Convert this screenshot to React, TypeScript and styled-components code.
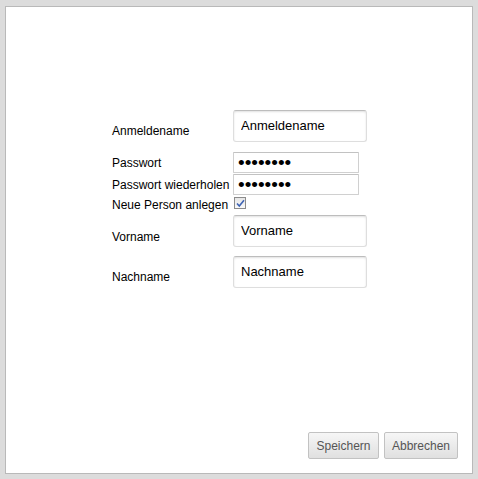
import styled, { createGlobalStyle } from 'styled-components';

const GlobalStyle = createGlobalStyle`
  html, body {
    margin: 0;
    padding: 0;
    background: #dcdcdc;
    font-family: 'Liberation Sans', Arial, sans-serif;
  }
`;

function CheckMark() {
  return (
    <svg width="9" height="9" viewBox="0 0 9 9">
      <path d="M1 4.5 L3.3 7 L8 1.2" fill="none" stroke="#3f64b4" strokeWidth="1.6" />
    </svg>
  );
}

function App() {
  return (
    <>
      <GlobalStyle />
      <Panel>
        <Form>
          <Row>
            <Label>Anmeldename</Label>
            <WideInput defaultValue="Anmeldename" $after={10} />
          </Row>
          <Row>
            <Label>Passwort</Label>
            <PasswordInput type="password" defaultValue="geheim12" $after={1} />
          </Row>
          <Row>
            <Label>Passwort wiederholen</Label>
            <PasswordInput type="password" defaultValue="geheim12" $after={0} />
          </Row>
          <Row>
            <Label>Neue Person anlegen</Label>
            <CheckBox>
              <CheckMark />
            </CheckBox>
          </Row>
          <Row>
            <Label $shift={2}>Vorname</Label>
            <WideInput defaultValue="Vorname" $before={1} $after={9} />
          </Row>
          <Row>
            <Label>Nachname</Label>
            <WideInput defaultValue="Nachname" $after={10} />
          </Row>
        </Form>
        <Footer>
          <Button $width={71}>Speichern</Button>
          <Button $width={74}>Abbrechen</Button>
        </Footer>
      </Panel>
    </>
  );
}

export default App;

const Panel = styled.div`
  box-sizing: border-box;
  margin: 6px 0 0 5px;
  width: 468px;
  height: 468px;
  background: #fff;
  border: 1px solid #b9b9b9;
  display: flex;
  flex-direction: column;
`;

const Form = styled.div`
  padding: 103px 0 0 106px;
  display: flex;
  flex-direction: column;
`;

const Row = styled.div`
  display: flex;
  align-items: center;
`;

const Label = styled.label<{ $shift?: number }>`
  width: 121px;
  flex: none;
  font-size: 12px;
  line-height: 14px;
  color: #000;
  white-space: nowrap;
  position: relative;
  top: ${({ $shift }) => $shift ?? 0}px;
`;

const WideInput = styled.input<{ $before?: number; $after?: number }>`
  box-sizing: border-box;
  width: 134px;
  height: 32px;
  margin: ${({ $before }) => $before ?? 0}px 0 ${({ $after }) => $after ?? 0}px 0;
  padding: 0 0 2px 7px;
  border: 1px solid #dedede;
  border-top-color: #bdbdbd;
  border-radius: 3px;
  box-shadow: inset 0 1px 2px rgba(0, 0, 0, 0.12);
  font-family: 'Liberation Sans', Arial, sans-serif;
  font-size: 13px;
  color: #000;
  background: #fff;
  outline: none;
`;

const PasswordInput = styled.input<{ $after?: number }>`
  box-sizing: border-box;
  width: 126px;
  height: 21px;
  margin: 0 0 ${({ $after }) => $after ?? 0}px 0;
  padding: 0 0 0 4px;
  border: 1px solid #d0d0d0;
  border-top-color: #c2c2c2;
  border-radius: 1px;
  font-family: 'Liberation Sans', Arial, sans-serif;
  font-size: 19px;
  color: #000;
  background: #fff;
  outline: none;
`;

const CheckBox = styled.span`
  box-sizing: border-box;
  width: 12px;
  height: 12px;
  margin: 2px 0 5px 1px;
  border: 1px solid #8c8c8c;
  background: linear-gradient(#e6e6e6, #fafafa);
  display: flex;
  align-items: center;
  justify-content: center;
`;

const Footer = styled.div`
  margin-top: auto;
  padding: 0 14px 14px 0;
  display: flex;
  justify-content: flex-end;
  gap: 5px;
`;

const Button = styled.button<{ $width: number }>`
  box-sizing: border-box;
  width: ${({ $width }) => $width}px;
  height: 27px;
  padding: 0;
  border: 1px solid #c2c2c2;
  border-radius: 2px;
  background: linear-gradient(#f6f6f6, #e0e0e0);
  font-family: 'Liberation Sans', Arial, sans-serif;
  font-size: 12px;
  color: #555;
`;
